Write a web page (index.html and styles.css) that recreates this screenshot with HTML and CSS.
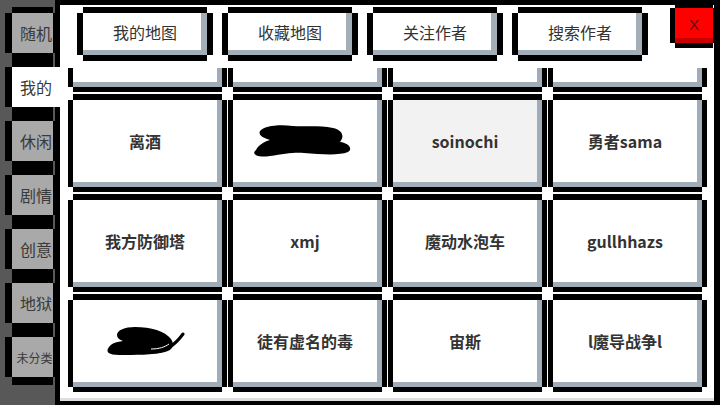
FILE: index.html
```html
<!DOCTYPE html>
<html>
  <head>
    <meta charset="utf-8" />
    <link rel="stylesheet" href="styles.css">
  </head>
  <body>
    <div class="app">
      <!-- category tabs on the left -->
      <div class="tabs">
        <div class="tab">随机</div>
        <div class="tab active">我的</div>
        <div class="tab">休闲</div>
        <div class="tab">剧情</div>
        <div class="tab">创意</div>
        <div class="tab">地狱</div>
        <div class="tab tab-small">未分类</div>
      </div>

      <div class="panel">
        <div class="panel-head">
          <div class="btn">我的地图</div>
          <div class="btn">收藏地图</div>
          <div class="btn">关注作者</div>
          <div class="btn">搜索作者</div>
          <div class="close">X</div>
        </div>

        <!-- author list, scrolled down by one row -->
        <div class="list">
          <div class="grid">
            <div class="cell"></div>
            <div class="cell"></div>
            <div class="cell"></div>
            <div class="cell"></div>

            <div class="cell">离酒</div>
            <div class="cell">
              <svg class="scribble wide" width="104" height="34" viewBox="0 0 104 34">
                <path d="M8 26 C3 30 9 34 22 32 C36 30 46 28 56 29 C72 30 90 32 100 28 C105 25 101 19 92 18 C97 12 94 6 85 4 C70 1 56 3 45 2 C30 0 16 2 12 7 C10 11 15 14 22 16 C15 18 10 22 8 26 Z" fill="#000"/>
              </svg>
            </div>
            <div class="cell selected">soinochi</div>
            <div class="cell">勇者sama</div>

            <div class="cell">我方防御塔</div>
            <div class="cell">xmj</div>
            <div class="cell">魔动水泡车</div>
            <div class="cell">gullhhazs</div>

            <div class="cell">
              <svg class="scribble" width="80" height="32" viewBox="0 0 80 32">
                <path d="M4 22 C0 27 4 30 14 30 C30 30 48 30 60 27 C68 25 70 20 66 14 C60 6 46 2 30 2 C20 2 12 5 12 10 C12 13 15 15 18 16 C10 17 6 19 4 22 Z" fill="#000"/>
                <path d="M50 27 C62 26 70 20 78 9" fill="none" stroke="#000" stroke-width="3" stroke-linecap="round"/>
                <path d="M46 24 C54 24 60 22 64 19" fill="none" stroke="#fff" stroke-width="1"/>
              </svg>
            </div>
            <div class="cell">徒有虚名的毒</div>
            <div class="cell">宙斯</div>
            <div class="cell">l魔导战争l</div>
          </div>
        </div>
      </div>
    </div>
  </body>
</html>
```

FILE: styles.css
```css
* {
  margin: 0;
  padding: 0;
  box-sizing: border-box;
}

body {
  width: 720px;
  height: 405px;
  overflow: hidden;
  background: #585858;
  font-family: "Noto Sans CJK SC", "Noto Sans", sans-serif;
  color: #333;
}

.app {
  display: flex;
  height: 405px;
}

/* Tabs column */
.tabs {
  width: 55px;
  flex: none;
  padding: 13px 0 0 12px;
  display: flex;
  flex-direction: column;
  gap: 14px;
  position: relative;
  z-index: 1;
}

/* pixel border: four offset shadows, corners left open */
.tab {
  width: 41px;
  height: 40px;
  padding-left: 7px;
  background: #a9a9a9;
  display: flex;
  align-items: center;
  justify-content: center;
  white-space: nowrap;
  font-size: 16px;
  color: #3a3a3a;
  box-shadow: 0 -6px #000, 0 8px #000, -7px 0 #000, 7px 0 #000;
}

.tab-small {
  padding-left: 4px;
  font-size: 12px;
}

.tab.active {
  background: #fff;
  box-shadow: 0 -6px #000, 0 8px #000, -7px 0 #000, 7px 0 #fff;
}

/* Main panel */
.panel {
  flex: 1;
  background: #fff;
  border: solid #000;
  border-width: 5px 6px 4px 5px;
  display: flex;
  flex-direction: column;
}

.panel-head {
  display: flex;
  align-items: flex-start;
  padding: 3px 1px 0 23px;
}

.btn {
  width: 124px;
  height: 42px;
  margin-top: 5px;
  margin-right: 21px;
  padding-bottom: 4px;
  background: #fff;
  display: flex;
  align-items: center;
  justify-content: center;
  font-size: 16px;
  color: #333;
  box-shadow: inset -6px -5px #a3aeb9, 0 -6px #000, 0 6px #000,
    -6px 0 #000, 6px 0 #000;
}

.close {
  margin-left: auto;
  width: 38px;
  height: 35px;
  padding-bottom: 3px;
  background: #f00;
  display: flex;
  align-items: center;
  justify-content: center;
  font-family: "Liberation Sans", sans-serif;
  font-size: 15px;
  color: #5a1414;
  box-shadow: inset 0 -5px #c80000, 0 -5px #000, 0 5px #000, -5px 0 #000,
    5px 0 #000;
}

/* Author list */
.list {
  flex: 1;
  margin-top: 13px;
  padding-left: 13px;
  overflow: hidden;
  border-bottom: 3px solid #dedede;
}

.grid {
  display: grid;
  grid-template-columns: repeat(4, 149px);
  grid-auto-rows: 87px;
  column-gap: 11px;
  row-gap: 13px;
  margin-top: -68px;
}

.cell {
  padding: 0 5px 5px 0;
  background: #fff;
  display: flex;
  align-items: center;
  justify-content: center;
  font-size: 16px;
  font-weight: 700;
  color: #333;
  box-shadow: inset -5px -5px #a0adb9, 0 -6px #000, 0 5px #000,
    -5px 0 #000, 5px 0 #000;
}

.cell.selected {
  background: #f2f2f2;
}

.scribble {
  display: block;
}

.scribble.wide {
  margin-right: 10px;
}
```
